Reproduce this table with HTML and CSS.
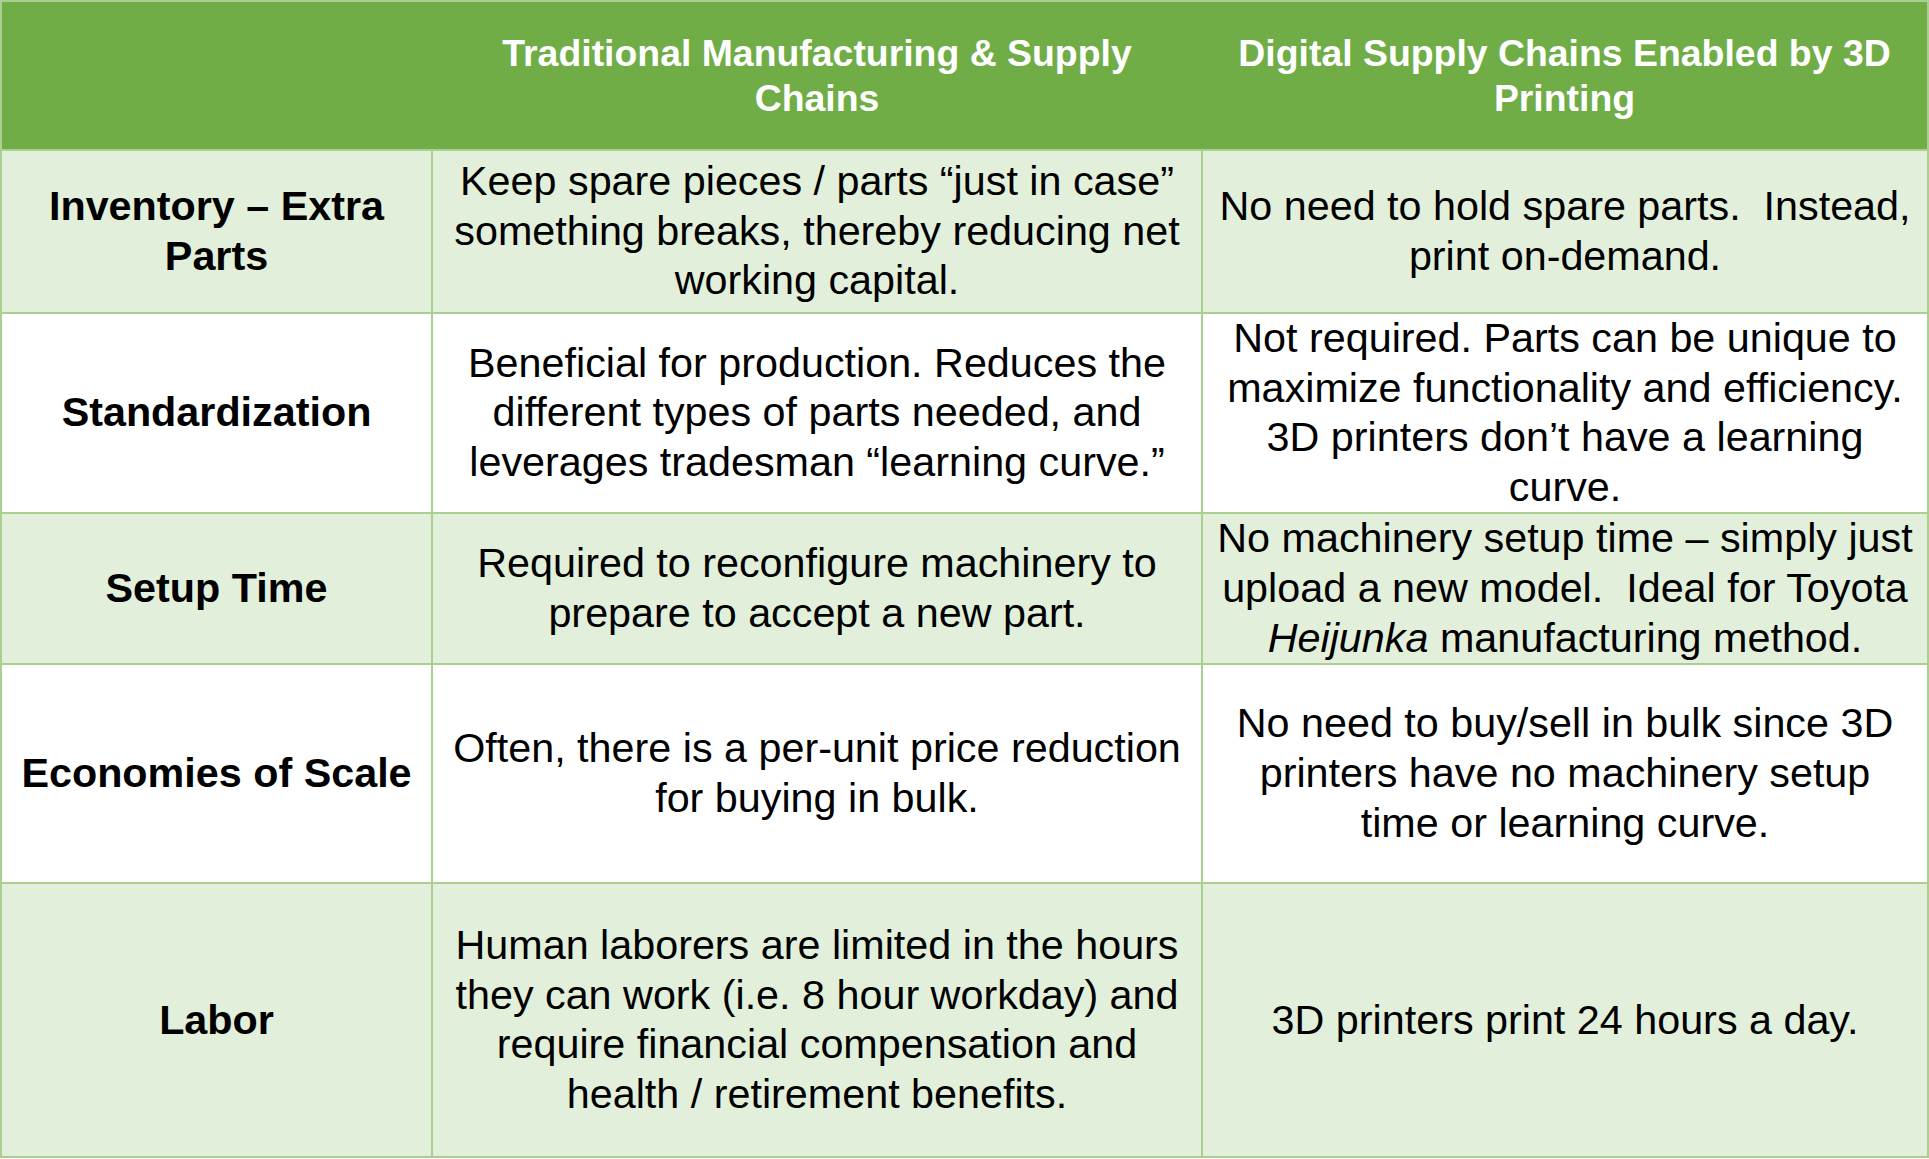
FILE: index.html
```html
<!DOCTYPE html>
<html>
<head>
<meta charset="utf-8">
<link rel="stylesheet" href="styles.css">
</head>
<body>
<table class="cmp">
  <colgroup>
    <col class="c1">
    <col class="c2">
    <col class="c3">
  </colgroup>
  <thead>
    <tr class="r-head">
      <th></th>
      <th>Traditional Manufacturing &amp; Supply<br>Chains</th>
      <th>Digital Supply Chains Enabled by 3D<br>Printing</th>
    </tr>
  </thead>
  <tbody>
    <tr class="r1 tint">
      <td class="lab">Inventory – Extra<br>Parts</td>
      <td>Keep spare pieces / parts “just in case”<br>something breaks, thereby reducing net<br>working capital.</td>
      <td>No need to hold spare parts.&nbsp; Instead,<br>print on-demand.</td>
    </tr>
    <tr class="r2">
      <td class="lab">Standardization</td>
      <td>Beneficial for production. Reduces the<br>different types of parts needed, and<br>leverages tradesman “learning curve.”</td>
      <td>Not required. Parts can be unique to<br>maximize functionality and efficiency.<br>3D printers don’t have a learning<br>curve.</td>
    </tr>
    <tr class="r3 tint">
      <td class="lab">Setup Time</td>
      <td>Required to reconfigure machinery to<br>prepare to accept a new part.</td>
      <td>No machinery setup time – simply just<br>upload a new model.&nbsp; Ideal for Toyota<br><i>Heijunka</i> manufacturing method.</td>
    </tr>
    <tr class="r4">
      <td class="lab">Economies of Scale</td>
      <td>Often, there is a per-unit price reduction<br>for buying in bulk.</td>
      <td>No need to buy/sell in bulk since 3D<br>printers have no machinery setup<br>time or learning curve.</td>
    </tr>
    <tr class="r5 tint">
      <td class="lab">Labor</td>
      <td>Human laborers are limited in the hours<br>they can work (i.e. 8 hour workday) and<br>require financial compensation and<br>health / retirement benefits.</td>
      <td>3D printers print 24 hours a day.</td>
    </tr>
  </tbody>
</table>
</body>
</html>
```
FILE: styles.css
```css
html, body {
  margin: 0;
  padding: 0;
  background: #ffffff;
}

.cmp {
  border-collapse: collapse;
  table-layout: fixed;
  width: 1927px;
  font-family: "Liberation Sans", Arial, sans-serif;
  color: #000000;
}

.c1 { width: 431px; }
.c2 { width: 770px; }
.c3 { width: 726px; }

.cmp th,
.cmp td {
  padding: 0 6px;
  text-align: center;
  vertical-align: middle;
  white-space: nowrap;
  overflow: hidden;
}

.cmp td {
  border: 2px solid #a9d08e;
  font-size: 41.3px;
  line-height: 49.6px;
}

.cmp th {
  background: #70ad47;
  color: #ffffff;
  font-weight: bold;
  font-size: 37.4px;
  line-height: 44.4px;
  border-top: 2px solid #a9d08e;
  border-bottom: 2px solid #a9d08e;
}

.cmp th:first-child { border-left: 2px solid #a9d08e; }
.cmp th:last-child { border-right: 2px solid #a9d08e; }

.cmp td.lab {
  font-weight: bold;
}

.tint td {
  background: #e2efda;
}

.r-head { height: 149px; }
.r1 { height: 163px; }
.r2 { height: 200px; }
.r3 { height: 151px; }
.r4 { height: 219px; }
.r5 { height: 274px; }
```
